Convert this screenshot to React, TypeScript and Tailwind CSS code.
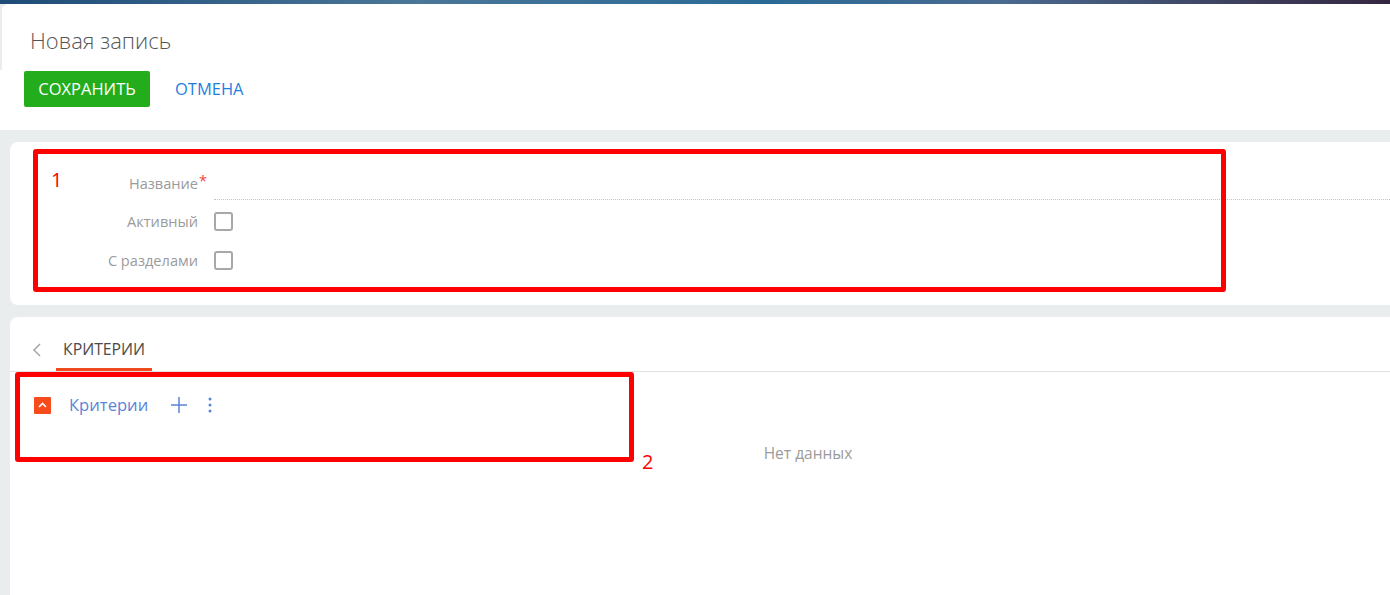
import { ReactNode } from "react";

type FieldRowProps = {
  label: string;
  required?: boolean;
  className?: string;
  children: ReactNode;
};

function FieldRow({ label, required, className, children }: FieldRowProps) {
  return (
    <div className={`flex items-center ${className ?? ""}`}>
      <div className="relative w-[188px] shrink-0 text-right text-[14.6px] text-[#9b9b9b]">
        {label}
        {required && (
          <span className="absolute left-full top-[-3px] pl-[1px] text-[#f44336]">*</span>
        )}
      </div>
      <div className="ml-[16px] flex h-full flex-1 items-center">{children}</div>
    </div>
  );
}

function Checkbox() {
  return (
    <span className="block h-[19px] w-[19px] rounded-[3px] border-2 border-[#a8a8a8] bg-white" />
  );
}

function Annotation({ className, label, labelClass }: { className: string; label: string; labelClass: string }) {
  return (
    <>
      <div className={`pointer-events-none absolute rounded-[3px] border-[5px] border-[#ff0000] ${className}`} />
      <span className={`pointer-events-none absolute text-[20px] leading-none text-[#ff0000] ${labelClass}`}>
        {label}
      </span>
    </>
  );
}

export default function App() {
  return (
    <div className="relative flex h-[595px] w-full flex-col overflow-hidden bg-[#e9eded] font-['Open_Sans',sans-serif]">
      {/* app top strip */}
      <div className="h-[4px] shrink-0 bg-[linear-gradient(90deg,#1f4c77_0%,#4a7698_30%,#2a6a96_55%,#4a6a90_72%,#35263f_100%)]" />

      {/* page header */}
      <div className="shrink-0 bg-[#e9eded]">
        <div className="ml-[2px] h-[66px] rounded-tl-[6px] bg-white pl-[28px] pt-[21px]">
          <h1 className="text-[22px] font-light leading-[30px] text-[#555]">Новая запись</h1>
        </div>
        <div className="flex h-[60px] items-start gap-[25px] bg-white pl-[24px] pt-[1px]">
          <button className="h-[36px] w-[126px] rounded-[2px] bg-[#23ad1c] text-[16.5px] text-white">
            СОХРАНИТЬ
          </button>
          <button className="h-[36px] text-[16.5px] text-[#1f7fe0]">ОТМЕНА</button>
        </div>
      </div>

      {/* main fields */}
      <div className="ml-[10px] mt-[12px] h-[163px] shrink-0 rounded-l-[8px] bg-white pt-[26px]">
        <FieldRow label="Название" required className="h-[32px]">
          <div className="h-full w-full border-b border-dotted border-[#c4c4c4]" />
        </FieldRow>
        <FieldRow label="Активный" className="mt-[2px] h-[39px]">
          <Checkbox />
        </FieldRow>
        <FieldRow label="С разделами" className="h-[39px]">
          <Checkbox />
        </FieldRow>
      </div>

      {/* detail tabs */}
      <div className="ml-[10px] mt-[12px] flex-1 rounded-tl-[8px] bg-white">
        <div className="flex h-[55px] border-b border-[#e1e1e1]">
          <div className="flex w-[46px] items-start pl-[22px] pt-[26px]">
            <svg width="10" height="14" viewBox="0 0 10 14" fill="none">
              <path d="M8 1 2 7l6 6" stroke="#a9a9a9" strokeWidth="1.6" />
            </svg>
          </div>
          <div className="border-b-[3px] border-[#f24a1f] px-[7px] pt-[22px] text-[15.8px] leading-[20px] text-[#4a4a4a]">
            КРИТЕРИИ
          </div>
        </div>

        <div className="flex items-center pl-[24px] pt-[24px]">
          <span className="flex h-[17px] w-[17px] items-center justify-center rounded-[1px] bg-[#f64b1c]">
            <svg width="9" height="6" viewBox="0 0 9 6" fill="none">
              <path d="M1 5 4.5 1.5 8 5" stroke="#fff" strokeWidth="1.6" />
            </svg>
          </span>
          <span className="ml-[18px] text-[16.6px] leading-[18px] text-[#5a85d6]">Критерии</span>
          <svg className="ml-[22px]" width="18" height="18" viewBox="0 0 18 18" fill="none">
            <path d="M9 1v16M1 9h16" stroke="#5a85d6" strokeWidth="1.5" />
          </svg>
          <svg className="ml-[20px]" width="4" height="16" viewBox="0 0 4 16" fill="#5a85d6">
            <circle cx="2" cy="2" r="1.5" />
            <circle cx="2" cy="8" r="1.5" />
            <circle cx="2" cy="14" r="1.5" />
          </svg>
        </div>

        <div className="flex justify-center pl-[216px] pt-[29px] text-[15.5px] leading-[20px] text-[#9b9b9b]">
          Нет данных
        </div>
      </div>

      <Annotation className="left-[33px] top-[149px] h-[143px] w-[1193px]" label="1" labelClass="left-[51px] top-[170px]" />
      <Annotation className="left-[15px] top-[372px] h-[90px] w-[619px]" label="2" labelClass="left-[642px] top-[452px]" />
    </div>
  );
}
